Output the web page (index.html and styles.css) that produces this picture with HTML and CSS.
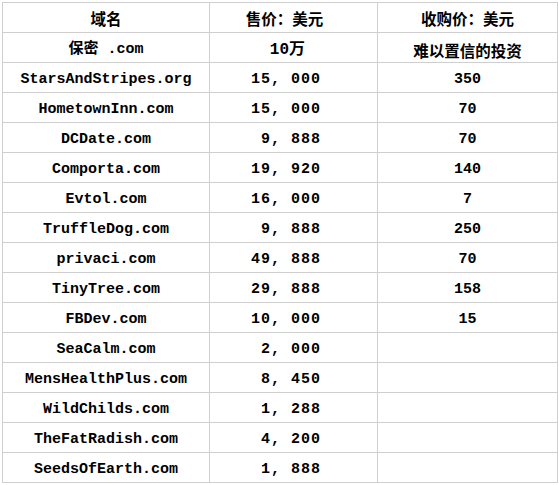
FILE: index.html
```html
<!DOCTYPE html>
<html lang="zh">
<head>
<meta charset="utf-8">
<link rel="stylesheet" href="styles.css">
</head>
<body>
<table class="sheet">
  <colgroup>
    <col class="c1"><col class="c2"><col class="c3">
  </colgroup>
  <tbody>
    <tr class="head"><td>域名</td><td class="cn">售价：美元</td><td>收购价：美元</td></tr>
    <tr><td>保密 .com</td><td class="wan">10万</td><td class="cn">难以置信的投资</td></tr>
    <tr><td>StarsAndStripes.org</td><td class="num">15, 000</td><td>350</td></tr>
    <tr><td>HometownInn.com</td><td class="num">15, 000</td><td>70</td></tr>
    <tr><td>DCDate.com</td><td class="num">9, 888</td><td>70</td></tr>
    <tr><td>Comporta.com</td><td class="num">19, 920</td><td>140</td></tr>
    <tr><td>Evtol.com</td><td class="num">16, 000</td><td>7</td></tr>
    <tr><td>TruffleDog.com</td><td class="num">9, 888</td><td>250</td></tr>
    <tr><td>privaci.com</td><td class="num">49, 888</td><td>70</td></tr>
    <tr><td>TinyTree.com</td><td class="num">29, 888</td><td>158</td></tr>
    <tr><td>FBDev.com</td><td class="num">10, 000</td><td>15</td></tr>
    <tr><td>SeaCalm.com</td><td class="num">2, 000</td><td></td></tr>
    <tr><td>MensHealthPlus.com</td><td class="num">8, 450</td><td></td></tr>
    <tr><td>WildChilds.com</td><td class="num">1, 288</td><td></td></tr>
    <tr><td>TheFatRadish.com</td><td class="num">4, 200</td><td></td></tr>
    <tr><td>SeedsOfEarth.com</td><td class="num">1, 888</td><td></td></tr>
  </tbody>
</table>
</body>
</html>
```
FILE: styles.css
```css
html, body {
  margin: 0;
  padding: 0;
  background: #ffffff;
}
body {
  padding: 2px 0 0 2px;
}
.sheet {
  border-collapse: collapse;
  table-layout: fixed;
  width: 555px;
  font-family: "Liberation Mono", "Noto Sans CJK SC", monospace;
  font-weight: bold;
  font-size: 15px;
  color: #000;
  border-top: 1px solid #b9c9dc;
}
.c1 { width: 207px; }
.c2 { width: 168px; }
.c3 { width: 180px; }
.sheet td {
  height: 24px;
  padding: 5px 0 0 0;
  text-align: center;
  vertical-align: middle;
  border: 1px solid #cfcfcf;
  white-space: nowrap;
  line-height: 18px;
}
.sheet .head td {
  height: 29px;
  padding: 0;
  font-family: "Noto Sans CJK SC", sans-serif;
  font-size: 15.5px;
}
.sheet .cn {
  font-family: "Noto Sans CJK SC", sans-serif;
  font-size: 15.5px;
}
.sheet .head .cn {
  padding-right: 18px;
}
.sheet .num {
  text-align: right;
  padding-right: 56px;
  letter-spacing: 1px;
}
.sheet .wan {
  text-align: right;
  padding-right: 72px;
  font-size: 16px;
}
```
